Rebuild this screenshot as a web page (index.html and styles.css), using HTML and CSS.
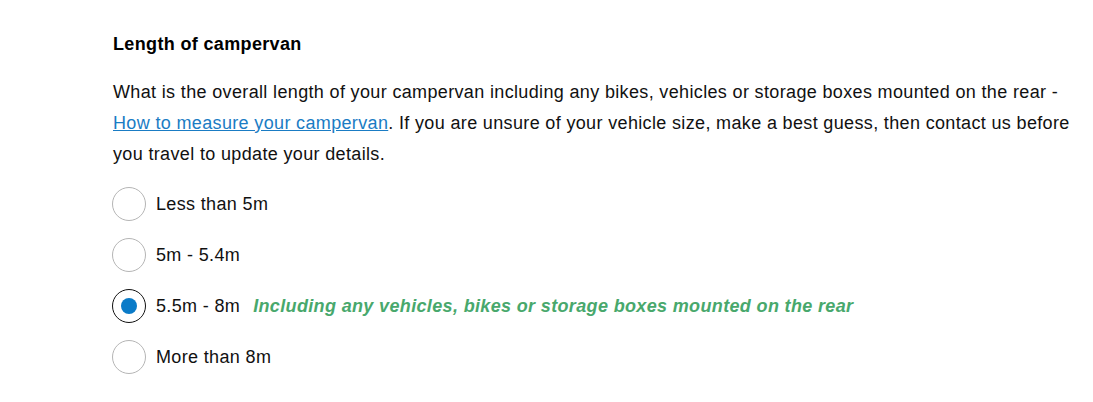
FILE: index.html
```html
<!DOCTYPE html>
<html>
<head>
<meta charset="utf-8">
<link rel="stylesheet" href="styles.css">
</head>
<body>
<div class="field">
  <h2 class="title">Length of campervan</h2>
  <p class="desc">What is the overall length of your campervan including any bikes, vehicles or storage boxes mounted on the rear - <a href="#" class="link">How to measure your campervan</a>. If you are unsure of your vehicle size, make a best guess, then contact us before you travel to update your details.</p>
  <div class="options">
    <label class="option"><span class="radio"></span><span class="label">Less than 5m</span></label>
    <label class="option"><span class="radio"></span><span class="label">5m - 5.4m</span></label>
    <label class="option"><span class="radio checked"></span><span class="label">5.5m - 8m</span><span class="note">Including any vehicles, bikes or storage boxes mounted on the rear</span></label>
    <label class="option"><span class="radio"></span><span class="label">More than 8m</span></label>
  </div>
</div>
</body>
</html>
```

FILE: styles.css
```css
html, body {
  margin: 0;
  padding: 0;
  background: #fff;
}
body {
  font-family: "Liberation Sans", Arial, sans-serif;
  color: #111;
  letter-spacing: 0.35px;
}
.field {
  padding: 33px 0 0 113px;
  width: 968px;
}
.title {
  margin: 0;
  font-size: 18px;
  line-height: 22px;
  font-weight: bold;
  color: #000;
  letter-spacing: 0.35px;
}
.desc {
  margin: 22px 0 0;
  font-size: 18px;
  line-height: 31px;
}
.link {
  color: #1a7cc4;
  text-decoration: underline;
}
.options {
  margin-top: 17px;
  display: flex;
  flex-direction: column;
  gap: 17px;
}
.option {
  display: flex;
  align-items: center;
  height: 34px;
  font-size: 18px;
}
.radio {
  box-sizing: border-box;
  width: 34px;
  height: 34px;
  border-radius: 50%;
  border: 1px solid #b5b5b5;
  margin-left: -1px;
  margin-right: 10px;
  display: flex;
  align-items: center;
  justify-content: center;
  flex: none;
}
.radio.checked {
  border: 1.5px solid #111;
}
.radio.checked::after {
  content: "";
  width: 16px;
  height: 16px;
  border-radius: 50%;
  background: #0a7bc8;
}
.label {
  color: #111;
}
.note {
  margin-left: 13px;
  font-weight: bold;
  font-style: italic;
  color: #48a86c;
  font-size: 18px;
  letter-spacing: 0.35px;
}
```
